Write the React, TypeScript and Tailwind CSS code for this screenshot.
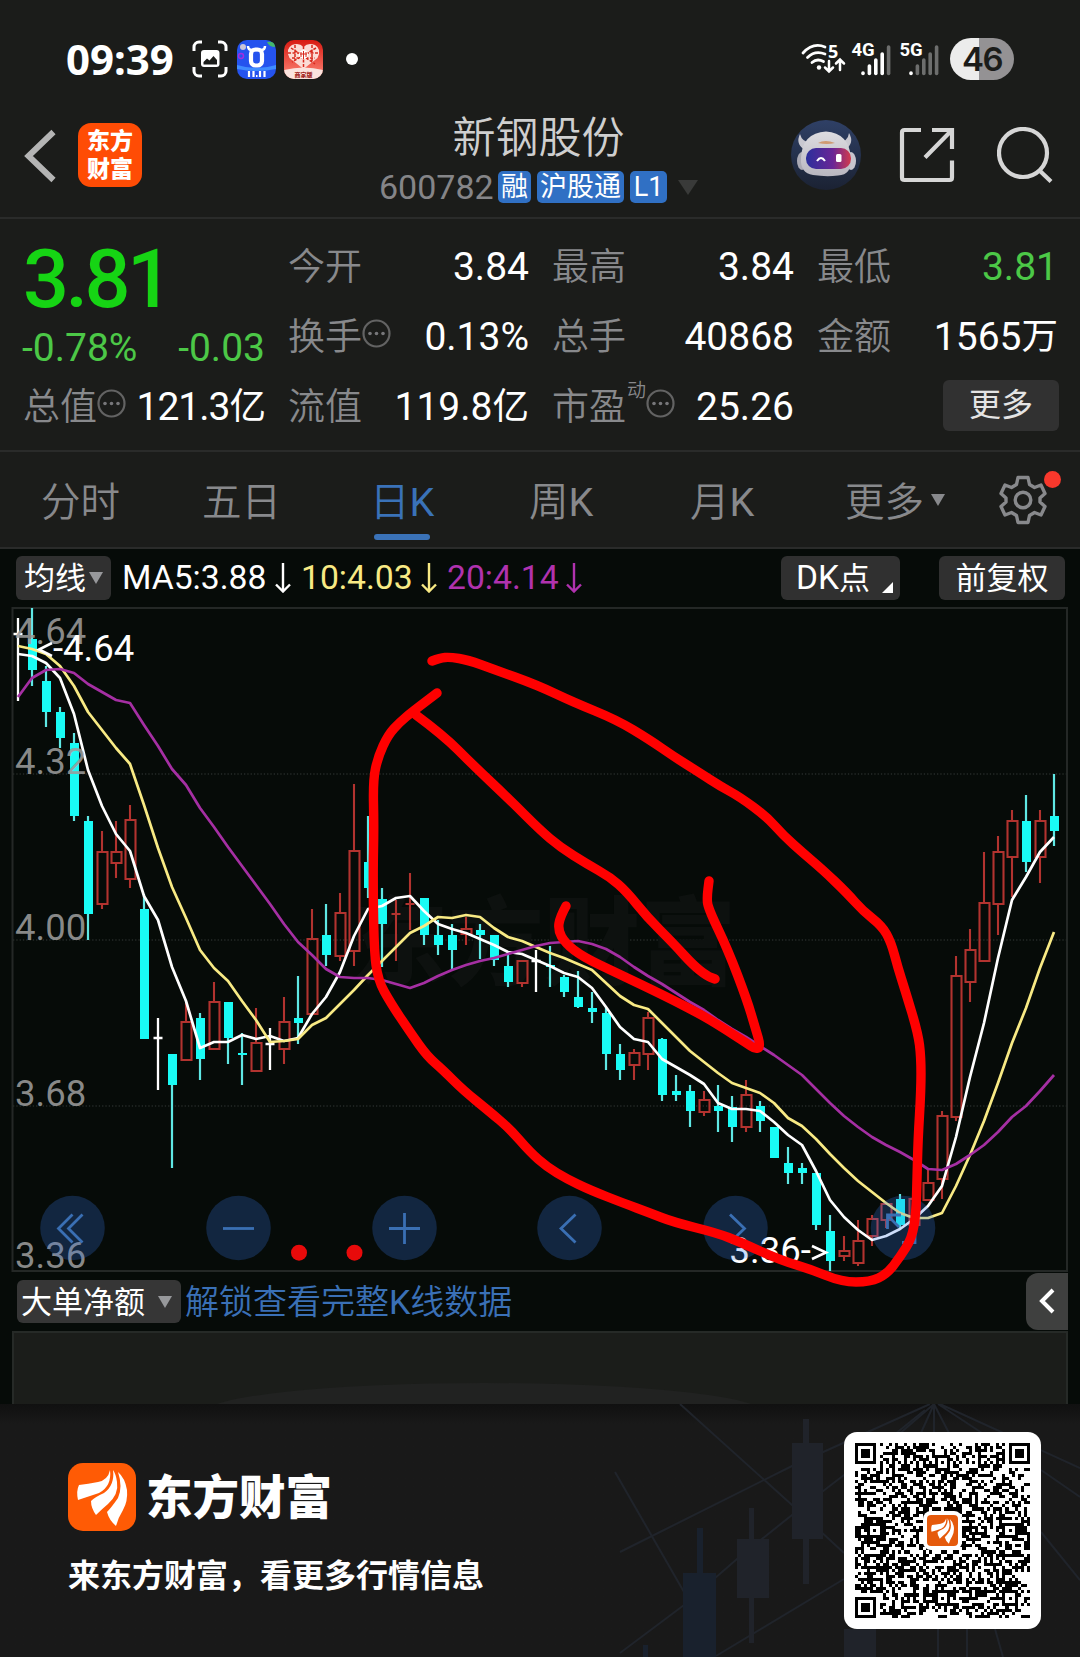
import React from "react";

type Candle = [
  kind: "r" | "c" | "w",
  high: number,
  top: number,
  bottom: number,
  low: number
];

// r = up (hollow red), c = down (solid cyan), w = flat
const candles: Candle[] = [
  ["w", 618, 634, 634, 701],
  ["c", 608, 639, 670, 686],
  ["c", 666, 681, 712, 727],
  ["c", 707, 712, 738, 748],
  ["c", 733, 743, 816, 821],
  ["c", 816, 821, 914, 940],
  ["r", 831, 852, 904, 909],
  ["r", 821, 852, 863, 878],
  ["r", 805, 820, 879, 888],
  ["c", 894, 909, 1039, 1039],
  ["w", 1018, 1038, 1038, 1090],
  ["c", 1054, 1054, 1085, 1168],
  ["r", 1003, 1022, 1060, 1060],
  ["c", 1013, 1018, 1059, 1080],
  ["r", 982, 1002, 1049, 1049],
  ["c", 1002, 1002, 1038, 1064],
  ["c", 1033, 1053, 1055, 1085],
  ["r", 1008, 1043, 1071, 1071],
  ["w", 1028, 1044, 1044, 1070],
  ["r", 997, 1022, 1049, 1064],
  ["c", 976, 1018, 1023, 1044],
  ["r", 909, 939, 1014, 1014],
  ["c", 904, 935, 955, 966],
  ["r", 893, 913, 956, 961],
  ["r", 784, 851, 951, 966],
  ["c", 816, 862, 888, 898],
  ["c", 888, 899, 924, 967],
  ["r", 900, 914, 914, 961],
  ["r", 873, 904, 904, 930],
  ["c", 898, 898, 935, 945],
  ["c", 920, 935, 945, 955],
  ["c", 924, 935, 950, 970],
  ["r", 917, 929, 934, 945],
  ["c", 924, 930, 935, 959],
  ["c", 935, 935, 960, 966],
  ["c", 955, 966, 982, 987],
  ["r", 961, 961, 983, 987],
  ["w", 950, 961, 961, 992],
  ["c", 946, 965, 967, 987],
  ["c", 975, 977, 992, 997],
  ["c", 971, 997, 1007, 1008],
  ["c", 992, 1008, 1012, 1023],
  ["c", 1007, 1013, 1054, 1070],
  ["c", 1044, 1054, 1070, 1080],
  ["r", 1049, 1053, 1065, 1080],
  ["r", 1012, 1018, 1054, 1070],
  ["c", 1038, 1039, 1095, 1101],
  ["c", 1075, 1091, 1095, 1101],
  ["c", 1085, 1091, 1111, 1127],
  ["r", 1091, 1100, 1112, 1116],
  ["c", 1085, 1106, 1111, 1132],
  ["c", 1096, 1107, 1127, 1142],
  ["r", 1080, 1095, 1127, 1132],
  ["c", 1101, 1106, 1121, 1132],
  ["c", 1127, 1127, 1158, 1158],
  ["c", 1147, 1163, 1173, 1184],
  ["c", 1163, 1168, 1173, 1184],
  ["c", 1173, 1173, 1225, 1230],
  ["c", 1215, 1231, 1261, 1271],
  ["r", 1236, 1251, 1256, 1261],
  ["r", 1220, 1241, 1263, 1266],
  ["r", 1215, 1219, 1236, 1246],
  ["r", 1202, 1204, 1220, 1228],
  ["c", 1194, 1199, 1225, 1230],
  ["r", 1198, 1199, 1225, 1225],
  ["r", 1170, 1183, 1200, 1200],
  ["r", 1111, 1116, 1179, 1199],
  ["r", 956, 976, 1117, 1121],
  ["r", 929, 950, 982, 1002],
  ["r", 852, 903, 961, 961],
  ["r", 836, 852, 904, 935],
  ["r", 810, 821, 857, 897],
  ["c", 795, 821, 862, 872],
  ["r", 810, 821, 857, 883],
  ["c", 774, 816, 831, 846],
];

const ma5 = [
  654, 656, 663, 678, 714, 770, 806, 834, 851, 896, 920, 967, 1001, 1048, 1042,
  1042, 1035, 1039, 1036, 1041, 1038, 1014, 997, 972, 936, 909, 906, 898, 896,
  911, 924, 929, 933, 939, 945, 952, 954, 960, 966, 973, 977, 988, 1007, 1027,
  1039, 1042, 1059, 1067, 1075, 1084, 1103, 1109, 1109, 1111, 1122, 1135, 1145,
  1171, 1200, 1217, 1230, 1240, 1236, 1229, 1219, 1206, 1186, 1137, 1077, 1023,
  958, 900, 877, 852, 837,
];

const ma10 = [
  646, 649, 654, 666, 686, 712, 730, 748, 764, 805, 848, 887, 918, 950, 968, 981,
  1001, 1020, 1042, 1041, 1039, 1025, 1018, 1004, 990, 975, 961, 947, 933, 926,
  917, 918, 915, 917, 928, 937, 941, 947, 953, 958, 964, 970, 983, 996, 1005,
  1009, 1023, 1037, 1051, 1062, 1073, 1083, 1088, 1093, 1103, 1118, 1126, 1139,
  1154, 1168, 1181, 1192, 1203, 1213, 1218, 1218, 1213, 1186, 1155, 1121, 1083,
  1043, 1008, 968, 932,
];

const ma20 = [
  697, 678, 670, 669, 673, 684, 692, 700, 703, 725, 746, 769, 785, 808, 827, 847,
  866, 885, 904, 924, 942, 955, 969, 977, 978, 978, 980, 984, 988, 983, 976, 970,
  965, 961, 958, 954, 950, 946, 943, 942, 941, 944, 949, 957, 967, 976, 984, 993,
  1002, 1010, 1020, 1029, 1037, 1046, 1055, 1065, 1075, 1089, 1103, 1116, 1127,
  1137, 1145, 1152, 1160, 1169, 1170, 1164, 1155, 1145, 1132, 1117, 1106, 1091,
  1075,
];

const xAt = (i: number) => 18 + i * 14;

const linePoints = (values: number[]) =>
  values.map((y, i) => `${xAt(i)},${y}`).join(" ");

// smooth curve through hand drawn points
const smooth = (pts: number[][]) => {
  let d = `M${pts[0][0]} ${pts[0][1]}`;
  for (let i = 1; i < pts.length - 1; i++) {
    const mx = (pts[i][0] + pts[i + 1][0]) / 2;
    const my = (pts[i][1] + pts[i + 1][1]) / 2;
    d += ` Q${pts[i][0]} ${pts[i][1]} ${mx} ${my}`;
  }
  const last = pts[pts.length - 1];
  return d + ` L${last[0]} ${last[1]}`;
};

const loopStroke = [
  [432, 661], [440, 658], [450, 657], [468, 660], [493, 669], [537, 685],
  [573, 702], [617, 720], [650, 740], [673, 756], [700, 773], [720, 786],
  [740, 797], [767, 817], [783, 835], [803, 853], [823, 870], [847, 893],
  [863, 911], [882, 926], [891, 942], [898, 968], [905, 990], [918, 1033],
  [921, 1057], [921, 1090], [918, 1140], [917, 1180], [916, 1213],
  [912, 1238], [900, 1257], [887, 1274], [870, 1282], [842, 1282],
  [810, 1269], [780, 1260], [740, 1242], [717, 1233], [673, 1222],
  [650, 1213], [623, 1203], [590, 1190], [567, 1179], [547, 1167],
  [530, 1152], [510, 1129], [490, 1112], [463, 1090], [443, 1070],
  [427, 1056], [410, 1032], [390, 1002], [378, 980], [374, 950], [373, 873],
  [374, 827], [373, 780], [378, 757], [388, 735], [400, 722], [412, 712],
  [437, 693],
];

const shaftStroke = [
  [416, 715], [443, 735], [473, 765], [510, 800], [540, 830], [560, 847],
  [587, 864], [610, 877], [627, 892], [647, 917], [673, 943], [693, 965],
  [707, 976], [715, 979],
];

const headStroke = [
  [566, 906], [560, 917], [558, 930], [565, 943], [583, 957], [617, 973],
  [667, 997], [700, 1014], [720, 1026], [748, 1044], [755, 1049],
  [761, 1047], [755, 1027], [747, 1000], [728, 950], [708, 908], [707, 897],
  [709, 881],
];

const CandleShape = ({ candle, x }: { candle: Candle; x: number }) => {
  const [kind, high, top, bottom, low] = candle;
  if (kind === "w") {
    return (
      <path
        d={`M${x} ${high}V${low}M${x - 4.5} ${top}H${x + 4.5}`}
        stroke="#fff"
        strokeWidth="2.3"
      />
    );
  }
  if (kind === "c") {
    return (
      <g>
        <path d={`M${x} ${high}V${low}`} stroke="#5fe8e4" strokeWidth="2.2" />
        <rect x={x - 4} y={top} width="9" height={bottom - top} fill="#19fbf5" />
      </g>
    );
  }
  if (top === bottom) {
    return (
      <path
        d={`M${x} ${high}V${low}M${x - 4.5} ${top}H${x + 4.5}`}
        stroke="#b2332f"
        strokeWidth="2.1"
      />
    );
  }
  return (
    <path
      d={`M${x} ${high}V${top}M${x} ${bottom}V${low}M${x - 4.5} ${top}h10v${
        bottom - top
      }h-10z`}
      fill="none"
      stroke="#b2332f"
      strokeWidth="2.1"
    />
  );
};

const Chart = () => (
  <svg
    className="block"
    width="1080"
    height="663"
    viewBox="0 608 1080 663"
    overflow="visible"
  >
    <g fill="none" stroke="#242826" strokeWidth="2">
      <rect x="12.5" y="608" width="1054.5" height="663" />
      <path
        d="M13 774H1067M13 940H1067M13 1106H1067"
        stroke="#262b28"
        strokeWidth="1.3"
        strokeDasharray="1.3 2"
      />
    </g>
    <text
      x="352"
      y="977"
      fontSize="96"
      fontWeight="900"
      fill="#0d110f"
      className="font-['Noto_Sans_CJK_SC',sans-serif]"
    >
      东方财富
    </text>
    {candles.map((candle, i) => (
      <CandleShape key={i} candle={candle} x={xAt(i)} />
    ))}
    <g fill="none" strokeWidth="2.7" strokeLinejoin="round">
      <polyline points={linePoints(ma5)} stroke="#fff" />
      <polyline points={linePoints(ma10)} stroke="#f8ea84" />
      <polyline points={linePoints(ma20)} stroke="#a52fa3" />
    </g>
    <g
      fontSize="36.5"
      className="font-[Roboto,sans-serif]"
      fill="#9b9b9b"
      fillOpacity="0.88"
    >
      <text x="15" y="644">4.64</text>
      <text x="15" y="773.5">4.32</text>
      <text x="15" y="940">4.00</text>
      <text x="15" y="1106">3.68</text>
      <text x="15" y="1268">3.36</text>
    </g>
    <g fontSize="36.5" className="font-[Roboto,sans-serif]" fill="#fff">
      <text x="53" y="661">-4.64</text>
      <text x="729.5" y="1263">3.36-</text>
      <path
        d="M52 643L39 649.5L52 656M812 1246L826 1252.500L812 1259"
        fill="none"
        stroke="#fff"
        strokeWidth="2.6"
      />
    </g>
    <g fill="#3676e6" fillOpacity="0.25">
      {[72.5, 238.5, 404.5, 569.5, 735.5, 903].map((cx) => (
        <circle key={cx} cx={cx} cy="1228" r="32.3" />
      ))}
    </g>
    <g fill="none" stroke="#3a6fb3" strokeWidth="2.8">
      <path d="M72.500 1214.500L58.500 1228.500L72.500 1242.500M82.500 1214.500L68.500 1228.500L82.500 1242.500" />
      <path d="M223 1228.500H254" />
      <path d="M389 1228.500H420M404.500 1213V1244" />
      <path d="M575.500 1214.500L561 1228.500L575.500 1242.500" />
      <path d="M730 1214.500L744.500 1228.500L730 1242.500" />
      <path d="M887.500 1229V1215H901M888 1216L899 1227M915 1229V1242.500H902" />
    </g>
    <circle cx="299" cy="1252.700" r="8" fill="#e80a0a" />
    <circle cx="354.500" cy="1252.700" r="8" fill="#e80a0a" />
    <g
      fill="none"
      stroke="#f00"
      strokeWidth="9.4"
      strokeLinecap="round"
      strokeLinejoin="round"
    >
      <path d={smooth(loopStroke)} />
      <path d={smooth(shaftStroke)} />
      <path d={smooth(headStroke)} />
    </g>
  </svg>
);

const StatusBar = () => (
  <div className="flex h-[100px] items-center pt-[18px] pl-[66px]">
    <span className="w-[126px] pb-px font-['Noto_Sans',sans-serif] text-[42px] leading-none font-bold text-white">
      09:39
    </span>
    <svg width="36" height="38" viewBox="0 0 36 38" fill="none">
      <path
        d="M2 11V7a5 5 0 0 1 5-5h3M26 2h3a5 5 0 0 1 5 5v4M34 27v4a5 5 0 0 1-5 5h-3M10 36H7a5 5 0 0 1-5-5v-4"
        stroke="#fff"
        strokeWidth="3"
      />
      <rect x="9" y="10" width="18.500" height="17" rx="3" fill="#fff" />
      <path d="M11.500 24.500v-2.500l3.500-3.500 2.500 2 4-4.500 3.500 4v4.500z" fill="#1b1c1a" />
    </svg>
    <svg className="ml-[9px]" width="39" height="39" viewBox="0 0 39 39">
      <rect width="39" height="39" rx="10" fill="#2553ee" />
      <path d="M0 25q20 6 39 0v4Q20 33 0 29z" fill="#3f8cff" />
      <circle cx="6" cy="7" r="3" fill="#cbc6d8" />
      <circle cx="4" cy="16" r="2.500" fill="none" stroke="#a22ce0" strokeWidth="1.500" />
      <path d="M30 2q8-1 8 5-6 0-8-5z" fill="#43b86b" />
      <path
        d="M11 6q0 4 4 4h9q4 0 4-4"
        fill="none"
        stroke="#fff"
        strokeWidth="2.500"
      />
      <rect x="14" y="9.500" width="11" height="16" rx="4.500" fill="none" stroke="#fff" strokeWidth="4.200" />
      <path d="M12 31v6M16.500 31v6M23 31v6M27.500 31v6M19 36h1.500" stroke="#fff" strokeWidth="2.200" />
    </svg>
    <svg className="ml-2" width="39" height="39" viewBox="0 0 39 39">
      <defs>
        <clipPath id="shop">
          <rect width="39" height="39" rx="10" />
        </clipPath>
        <linearGradient id="shopBg" x1="0" y1="0" x2="0" y2="1">
          <stop offset="0" stopColor="#d81a12" />
          <stop offset="1" stopColor="#ff8a7a" />
        </linearGradient>
      </defs>
      <g clipPath="url(#shop)">
        <rect width="39" height="39" fill="url(#shopBg)" />
        <path d="M0 30Q20 25 39 30V39H0z" fill="#fbe3de" />
        <path
          d="M19.500 29L5.500 18Q1 9 8 5q7-3 11.500 2Q24 2 31 5q7 4 2.500 13z"
          fill="#fbdcd6"
        />
        <path
          d="M7 8l24 16M32 8L8 22M19.500 6v22M11 5v16M28 5v16M4 13h31M8 18h23"
          stroke="#d8281d"
          strokeWidth="1.500"
          strokeDasharray="3 1.500"
        />
        <circle cx="19.500" cy="14.500" r="4.500" fill="#fff" />
        <path d="M17 12v5M19.500 11v8M22 12v5M16 14h7" stroke="#d8281d" />
        <text
          x="19.500"
          y="37"
          textAnchor="middle"
          fontSize="6"
          fontWeight="900"
          fill="#a3281e"
          className="font-['Noto_Sans_CJK_SC',sans-serif]"
        >
          商家版
        </text>
      </g>
    </svg>
    <span className="ml-[23px] size-[12px] rounded-full bg-white" />
    <svg
      className="ml-[443px]"
      width="44"
      height="32"
      viewBox="0 0 44 32"
      overflow="visible"
    >
      <g fill="none" stroke="#fff" strokeWidth="2.800" strokeLinecap="round">
        <path d="M2 10Q12-1 24 4M6.500 14.500Q14 7 24 11M11 19.500Q16 15 22.500 18.500" />
        <path d="M28 18v10M24 24.500l4 4 4-4M39 27V17M35 20.500l4-4 4 4" strokeWidth="2.500" />
      </g>
      <circle cx="18" cy="24.500" r="2.200" fill="#fff" />
      <text
        x="27"
        y="14.500"
        fontSize="18"
        fontWeight="700"
        fill="#fff"
        className="font-['Noto_Sans',sans-serif]"
      >
        5
      </text>
    </svg>
    <Signal label="4G" className="ml-[7px]" active={4} />
    <Signal label="5G" className="ml-[9px]" active={1} />
    <span className="ml-[11px] flex h-[42px] w-[64px] items-center justify-center rounded-full bg-linear-to-r from-[#ececec] from-45% to-[#949294] to-45% pt-px font-[Inter,sans-serif] text-[33px] font-semibold tracking-[-1.500px] text-[#1b1c1a]">
      46
    </span>
  </div>
);

const Signal = ({
  label,
  active,
  className,
}: {
  label: string;
  active: number;
  className: string;
}) => (
  <svg
    className={className}
    width="39"
    height="36"
    viewBox="0 0 39 36"
    overflow="visible"
  >
    <text
      x="-0.500"
      y="14.500"
      fontSize="18.500"
      fontWeight="700"
      fill="#fff"
      className="font-[Roboto,sans-serif]"
    >
      {label}
    </text>
    {[32, 25, 19, 13, 6].map((y, i) => (
      <path
        key={y}
        d={`M${11 + i * 6.4} ${y}V32.500`}
        stroke={i < active ? "#fff" : "#6d6e6d"}
        strokeWidth="3.600"
        strokeLinecap="round"
      />
    ))}
  </svg>
);

const Tag = ({ text, className }: { text: string; className: string }) => (
  <span
    className={`flex h-[32px] items-center justify-center rounded-[5px] bg-[#3070c4] pt-px text-[27px] leading-none text-white ${className}`}
  >
    {text}
  </span>
);

const Robot = () => (
  <svg width="70" height="70" viewBox="0 0 70 70">
    <defs>
      <linearGradient id="robotBg" x1="0" y1="0" x2="0" y2="1">
        <stop offset="0" stopColor="#2f4066" />
        <stop offset="1" stopColor="#1b2233" />
      </linearGradient>
      <linearGradient id="helmet" x1="0" y1="0" x2="0" y2="1">
        <stop offset="0" stopColor="#dddce0" />
        <stop offset="1" stopColor="#b9b7c1" />
      </linearGradient>
      <linearGradient id="visor">
        <stop offset="0" stopColor="#2b2f9c" />
        <stop offset="0.600" stopColor="#6a2596" />
        <stop offset="1" stopColor="#d23a4c" />
      </linearGradient>
    </defs>
    <circle cx="35" cy="35" r="35" fill="url(#robotBg)" />
    <path d="M9 14q-5 10 5 16l6-7q-9-1-11-9zM58 13q6 10-4 17l-6-7q9-2 10-10z" fill="#c9c8d0" />
    <ellipse cx="11" cy="41" rx="5" ry="9" fill="#aaa9b4" />
    <ellipse cx="60" cy="41" rx="5" ry="9" fill="#c8c5cd" />
    <path
      d="M10 38Q11 13 35 11.500Q58 13 60 38Q61 55 47 55.500Q35 57 22 55Q9 53 10 38z"
      fill="url(#helmet)"
    />
    <path d="M27 23q7-4 17 0q-8 2-17 0z" fill="#cf9a72" />
    <rect x="15" y="28" width="45" height="21" rx="10" fill="url(#visor)" />
    <path d="M26 41q4-6 8 0" fill="none" stroke="#fff" strokeWidth="2" />
    <rect x="45" y="34" width="5.500" height="8" rx="1.500" fill="#fff" />
  </svg>
);

const Header = () => (
  <div className="grid h-[119px] grid-cols-[379px_319px_382px] border-b-2 border-[#2a2b2a]">
    <div className="flex items-start pt-[23px] pl-[24px]">
      <svg className="mt-[6px]" width="32" height="54" viewBox="0 0 32 54">
        <path d="M29.500 3L4.500 27L29.500 51" fill="none" stroke="#b4b4b4" strokeWidth="6" />
      </svg>
      <div className="ml-[22px] flex h-[64px] w-[64px] flex-col items-center justify-center rounded-[13px] bg-[#ff4c05] pt-px text-[23px] leading-[28px] font-black text-white">
        <span>东方</span>
        <span>财富</span>
      </div>
    </div>
    <div className="flex flex-col pt-[16px]">
      <h1 className="text-center text-[43px] leading-[44px] font-[350] text-[#cfcfcf]">
        新钢股份
      </h1>
      <div className="mt-[11px] flex items-center">
        <span className="w-[119px] text-[34px] leading-[32px] text-[#858588]">
          600782
        </span>
        <Tag text="融" className="w-[33px]" />
        <Tag text="沪股通" className="ml-[6px] w-[87px]" />
        <Tag text="L1" className="ml-[6px] w-[37px]" />
        <svg className="ml-auto" width="20" height="15" viewBox="0 0 20 15">
          <path d="M0 0H20L10 15z" fill="#393a39" />
        </svg>
      </div>
    </div>
    <div className="flex items-start pt-[20px] pl-[93px]">
      <Robot />
      <svg className="mt-[7px] ml-[38px]" width="56" height="56" viewBox="0 0 56 56">
        <path
          d="M22 3H5.500Q3 3 3 5.500V50.500Q3 53 5.500 53H50.500Q53 53 53 50.500V33.500M33 3H53V22M52 4L26 30.500"
          fill="none"
          stroke="#d6d6d6"
          strokeWidth="4.200"
        />
      </svg>
      <svg className="mt-[7px] ml-[42px]" width="56" height="56" viewBox="0 0 56 56">
        <g fill="none" stroke="#d6d6d6" strokeWidth="4.200">
          <circle cx="26" cy="26" r="24" />
          <path d="M42.500 43.500L54 54.500" />
        </g>
      </svg>
    </div>
  </div>
);

const InfoDot = () => (
  <svg width="29" height="29" viewBox="0 0 29 29">
    <circle cx="14.500" cy="14.500" r="13" fill="none" stroke="#636363" strokeWidth="2.200" />
    <g fill="#77777a">
      <circle cx="8" cy="14.500" r="1.800" />
      <circle cx="14.500" cy="14.500" r="1.800" />
      <circle cx="21" cy="14.500" r="1.800" />
    </g>
  </svg>
);

type StatProps = {
  label: string;
  value: string;
  unit?: string;
  info?: boolean;
  sup?: string;
  green?: boolean;
  tight?: boolean;
};
const Stat = ({ label, value, unit, info, sup, green, tight }: StatProps) => (
  <div className="flex h-[70px] items-center justify-between pt-[3px]">
    <div className="flex items-center text-[37px] leading-none font-[350] text-[#88898c]">
      {label}
      {sup && <span className="-mt-[34px] ml-px text-[19px]">{sup}</span>}
      {info && (
        <span className="-mt-[8px]">
          <InfoDot />
        </span>
      )}
    </div>
    <div
      className={`flex items-center text-[39px] leading-none ${
        green ? "text-[#4cc847]" : "text-white"
      } ${tight ? "tracking-[-1px]" : ""}`}
    >
      {value}
      {unit && <span className="text-[36.500px]">{unit}</span>}
    </div>
  </div>
);

const Quote = () => (
  <div className="grid h-[233px] grid-cols-[242px_241px_242px_241px] gap-x-[23px] border-b-2 border-[#2a2b2a] pt-[12px] pl-[23px]">
    <div>
      <div className="h-[92px] pt-[9px] text-[81px] leading-[80px] font-medium tracking-[-3.500px] text-[#16d414]">
        3.81
      </div>
      <div className="flex h-[48px] items-center justify-between pt-[2px] text-[39px] leading-none text-[#4cc847]">
        <span className="-ml-px">-0.78%</span>
        <span>-0.03</span>
      </div>
      <Stat label="总值" value="121.3" unit="亿" info tight />
    </div>
    <div>
      <Stat label="今开" value="3.84" />
      <Stat label="换手" value="0.13%" info />
      <Stat label="流值" value="119.8" unit="亿" />
    </div>
    <div>
      <Stat label="最高" value="3.84" />
      <Stat label="总手" value="40868" />
      <Stat label="市盈" value="25.26" sup="动" info />
    </div>
    <div>
      <Stat label="最低" value="3.81" green />
      <Stat label="金额" value="1565" unit="万" />
      <div className="-mr-px flex h-[68px] items-center justify-end">
        <button className="h-[51px] w-[116px] rounded-[6px] bg-[#313131] text-[32px] leading-none text-[#e4e4e4]">
          更多
        </button>
      </div>
    </div>
  </div>
);

const KLabel = ({ text }: { text: string }) => (
  <>
    {text}
    <span className="font-normal">K</span>
  </>
);

const Tabs = () => (
  <div className="flex h-[97px] items-center border-b-2 border-[#2a2b2a] pl-[41px] text-[39.500px] leading-none font-[350] text-[#88898c]">
    <span className="w-[161px] pt-[7px]">分时</span>
    <span className="w-[168px] pt-[7px]">五日</span>
    <span className="relative w-[159px] pt-[7px] text-[#3a72b8]">
      <KLabel text="日" />
      <span className="absolute top-[58px] left-[4px] h-[6px] w-[56px] rounded-full bg-[#3a72b8]" />
    </span>
    <span className="w-[161px] pt-[7px]">
      <KLabel text="周" />
    </span>
    <span className="w-[155px] pt-[7px]">
      <KLabel text="月" />
    </span>
    <span className="w-[86px] pt-[7px]">更多</span>
    <svg width="14" height="12" viewBox="0 0 14 12">
      <path d="M0 0H14L7 12z" fill="#88898c" />
    </svg>
    <div className="relative ml-[54px]">
      <svg width="48" height="50" viewBox="0 0 48 50">
        <g fill="none" stroke="#88898c" strokeWidth="3.400" strokeLinejoin="round">
          <path d="M19 2.500H29L30.500 9.500L35.500 12.500L42 10L46 18.500L41 23V27L46 31.500L42 40L35.500 37.500L30.500 40.500L29 47.500H19L17.500 40.500L12.500 37.500L6 40L2 31.500L7 27V23L2 18.500L6 10L12.500 12.500L17.500 9.500z" />
          <circle cx="24" cy="25" r="7.800" />
        </g>
      </svg>
      <span className="absolute -top-[4px] left-[45px] size-[17px] rounded-full bg-[#f8382c]" />
    </div>
  </div>
);

const DownArrow = ({ color, className }: { color: string; className: string }) => (
  <svg className={className} width="16" height="30" viewBox="0 0 16 30">
    <path
      d="M8 0V28M1 21.500L8 28.500L15 21.500"
      fill="none"
      stroke={color}
      strokeWidth="2.400"
    />
  </svg>
);

const Caret = ({ className }: { className: string }) => (
  <svg className={className} width="14" height="12" viewBox="0 0 14 12">
    <path d="M0 0H14L7 12z" fill="#97989b" />
  </svg>
);

const ChartToolbar = () => (
  <div className="flex h-[59px] items-center pb-[2px] pl-[16px] text-[31px] leading-none text-white">
    <div className="flex h-[44px] w-[95px] items-center rounded-[6px] bg-[#303030] pt-px pl-[8px]">
      均线
      <Caret className="ml-[3px]" />
    </div>
    <span className="ml-[11px] w-[153px] pt-px text-[33.700px]">MA5:3.88</span>
    <DownArrow color="#fff" className="" />
    <span className="ml-[10px] w-[121px] pt-px text-[33.700px] text-[#f8ea84]">
      10:4.03
    </span>
    <DownArrow color="#f8ea84" className="-ml-[1px]" />
    <span className="ml-[10px] w-[119px] pt-px text-[33.700px] text-[#b032ae]">
      20:4.14
    </span>
    <DownArrow color="#b032ae" className="" />
    <div className="relative ml-auto flex h-[44px] w-[119px] items-center rounded-[6px] bg-[#303030] pt-px pl-[15px]">
      <span className="text-[33.500px]">DK</span>点
      <svg className="absolute right-[7px] bottom-[7px]" width="11" height="11">
        <path d="M11 0V11H0z" fill="#fff" />
      </svg>
    </div>
    <div className="mr-[15px] ml-[39px] flex h-[44px] w-[126px] items-center justify-center rounded-[6px] bg-[#303030] pt-[2px]">
      前复权
    </div>
  </div>
);

const SubToolbar = () => (
  <div className="flex h-[60px] items-center pl-[17px]">
    <div className="flex h-[43px] w-[164px] items-center rounded-[6px] bg-[#363636] pt-[2px] pl-[4px] text-[31px] leading-none text-white">
      大单净额
      <Caret className="ml-[13px]" />
    </div>
    <span className="ml-[4px] pt-[2px] text-[34px] leading-none font-[350] text-[#3a70b6]">
      解锁查看完整<span className="font-normal">K</span>线数据
    </span>
    <div className="mr-[12px] ml-auto flex h-[57px] w-[42px] items-center justify-center rounded-l-[12px] bg-[#3f403f]">
      <svg width="16" height="26" viewBox="0 0 16 26">
        <path d="M14 2L3 13L14 24" fill="none" stroke="#fff" strokeWidth="4" />
      </svg>
    </div>
  </div>
);

const LogoMark = () => (
  <g fill="#fff">
    <path d="M42 7Q40 17 30 19Q20 21 11 22Q8 28 10 37Q22 33 31 30Q44 23 42 7z" />
    <path d="M45 7Q47 22 36 30Q27 34 23 38Q23 45 28 52Q34 46 40 41Q51 31 49 19Q48 11 45 7z" />
    <path d="M50 9Q55 24 50 35Q43 45 39 49Q41 57 48 63Q50 55 55 47Q60 38 59 27Q57 15 50 9z" />
  </g>
);

const SIZE = 57;

const isFinder = (x: number, y: number) => {
  const dist = Math.max(Math.abs(x - 3), Math.abs(y - 3));
  return dist <= 3 && dist !== 2;
};

const qrCell = (x: number, y: number, seed: number) => {
  const far = SIZE - 8;
  if (x < 8 && y < 8) return isFinder(x, y);
  if (x >= far && y < 8) return isFinder(x - far - 1, y);
  if (x < 8 && y >= far) return isFinder(x, y - far - 1);
  for (const ax of [6, 28, 50]) {
    for (const ay of [6, 28, 50]) {
      if ((ax === 6 && ay !== 28) || (ay === 6 && ax !== 28)) continue;
      const dist = Math.max(Math.abs(x - ax), Math.abs(y - ay));
      if (dist <= 2) return dist !== 1;
    }
  }
  if (x === 6 || y === 6) return (x + y) % 2 === 0;
  return seed > 0.5;
};

const qrPath = (() => {
  let state = 600782;
  let d = "";
  for (let y = 0; y < SIZE; y++) {
    for (let x = 0; x < SIZE; x++) {
      state = (state * 1103515 + 12345) % 2147483647;
      if (qrCell(x, y, state / 2147483647)) d += `M${x} ${y}h1v1h-1z`;
    }
  }
  return d;
})();

const QrCode = () => (
  <div className="relative flex size-[197px] items-center justify-center rounded-[13px] bg-white">
    <svg width="175" height="175" viewBox="0 0 57 57" shapeRendering="crispEdges">
      <path d={qrPath} fill="#000" />
    </svg>
    <span className="absolute flex size-[39px] items-center justify-center rounded-[8px] bg-white">
      <svg width="31" height="31" viewBox="0 0 68 68">
        <rect width="68" height="68" rx="9" fill="#e55a0c" />
        <LogoMark />
      </svg>
    </span>
  </div>
);

const FooterArt = () => (
  <svg
    className="absolute inset-0"
    width="1080"
    height="253"
    viewBox="0 1404 1080 253"
  >
    <g fill="none" stroke="#20242b" strokeWidth="2">
      <path d="M680 1404L792 1505L844 1553" />
      <path d="M620 1552L792 1466L930 1404" />
      <path d="M615 1472L684 1592" />
      <path d="M620 1653L684 1605L737 1559L792 1515L844 1475L925 1410" />
      <path d="M716 1656L844 1579" />
      <path d="M934 1404L898 1435M934 1404L920 1435M934 1404V1435M934 1404L950 1435M938 1404L985 1435M940 1404L1080 1468M1041 1470L1080 1497M1041 1532L1080 1580M938 1629V1657M967 1629V1657M995 1629L1003 1657" />
    </g>
    <g fill="#20232a">
      <path d="M803 1419h6v165h-6zM792 1443h31v96h-31z" />
      <path d="M749 1508h5v135h-5zM737 1539h32v59h-32z" />
      <path d="M844 1629h32v28h-32z" />
    </g>
    <g fill="#19212d">
      <path d="M697 1528h6v50h-6zM683 1573h33v84h-33zM643 1645h5v12h-5z" />
    </g>
  </svg>
);

const Footer = () => (
  <div className="relative h-[253px] bg-[#191919] bg-linear-to-b from-[#101010] from-0% to-[#191919] to-8%">
    <FooterArt />
    <div className="relative flex h-full justify-between pr-[39px] pl-[68px]">
      <div className="pt-[59px] text-white">
        <div className="flex items-center">
          <svg width="68" height="68" viewBox="0 0 68 68">
            <rect width="68" height="68" rx="15" fill="#ff5b05" />
            <LogoMark />
          </svg>
          <span className="ml-[10px] pt-[2px] text-[46.500px] leading-none font-black">
            东方财富
          </span>
        </div>
        <p className="mt-[29px] text-[32px] leading-[32px] font-bold">
          来东方财富，看更多行情信息
        </p>
      </div>
      <div className="pt-[28px]">
        <QrCode />
      </div>
    </div>
  </div>
);

const App = () => {
  return (
    <div className="flex h-[1657px] w-[1080px] flex-col overflow-hidden bg-[#1b1c1a] font-[Roboto,'Noto_Sans_CJK_SC',sans-serif] whitespace-nowrap">
      <StatusBar />
      <Header />
      <Quote />
      <Tabs />
      <div className="bg-[#060b08]">
        <ChartToolbar />
        <Chart />
        <SubToolbar />
        <div className="mr-[12px] ml-[12px] h-[73px] overflow-hidden border-2 border-b-0 border-[#262a27] bg-[#1b1d1a]">
          <div className="mt-[50px] ml-[190px] h-[60px] w-[560px] rounded-[50%] bg-[#212221]" />
        </div>
      </div>
      <Footer />
    </div>
  );
};

export default App;
